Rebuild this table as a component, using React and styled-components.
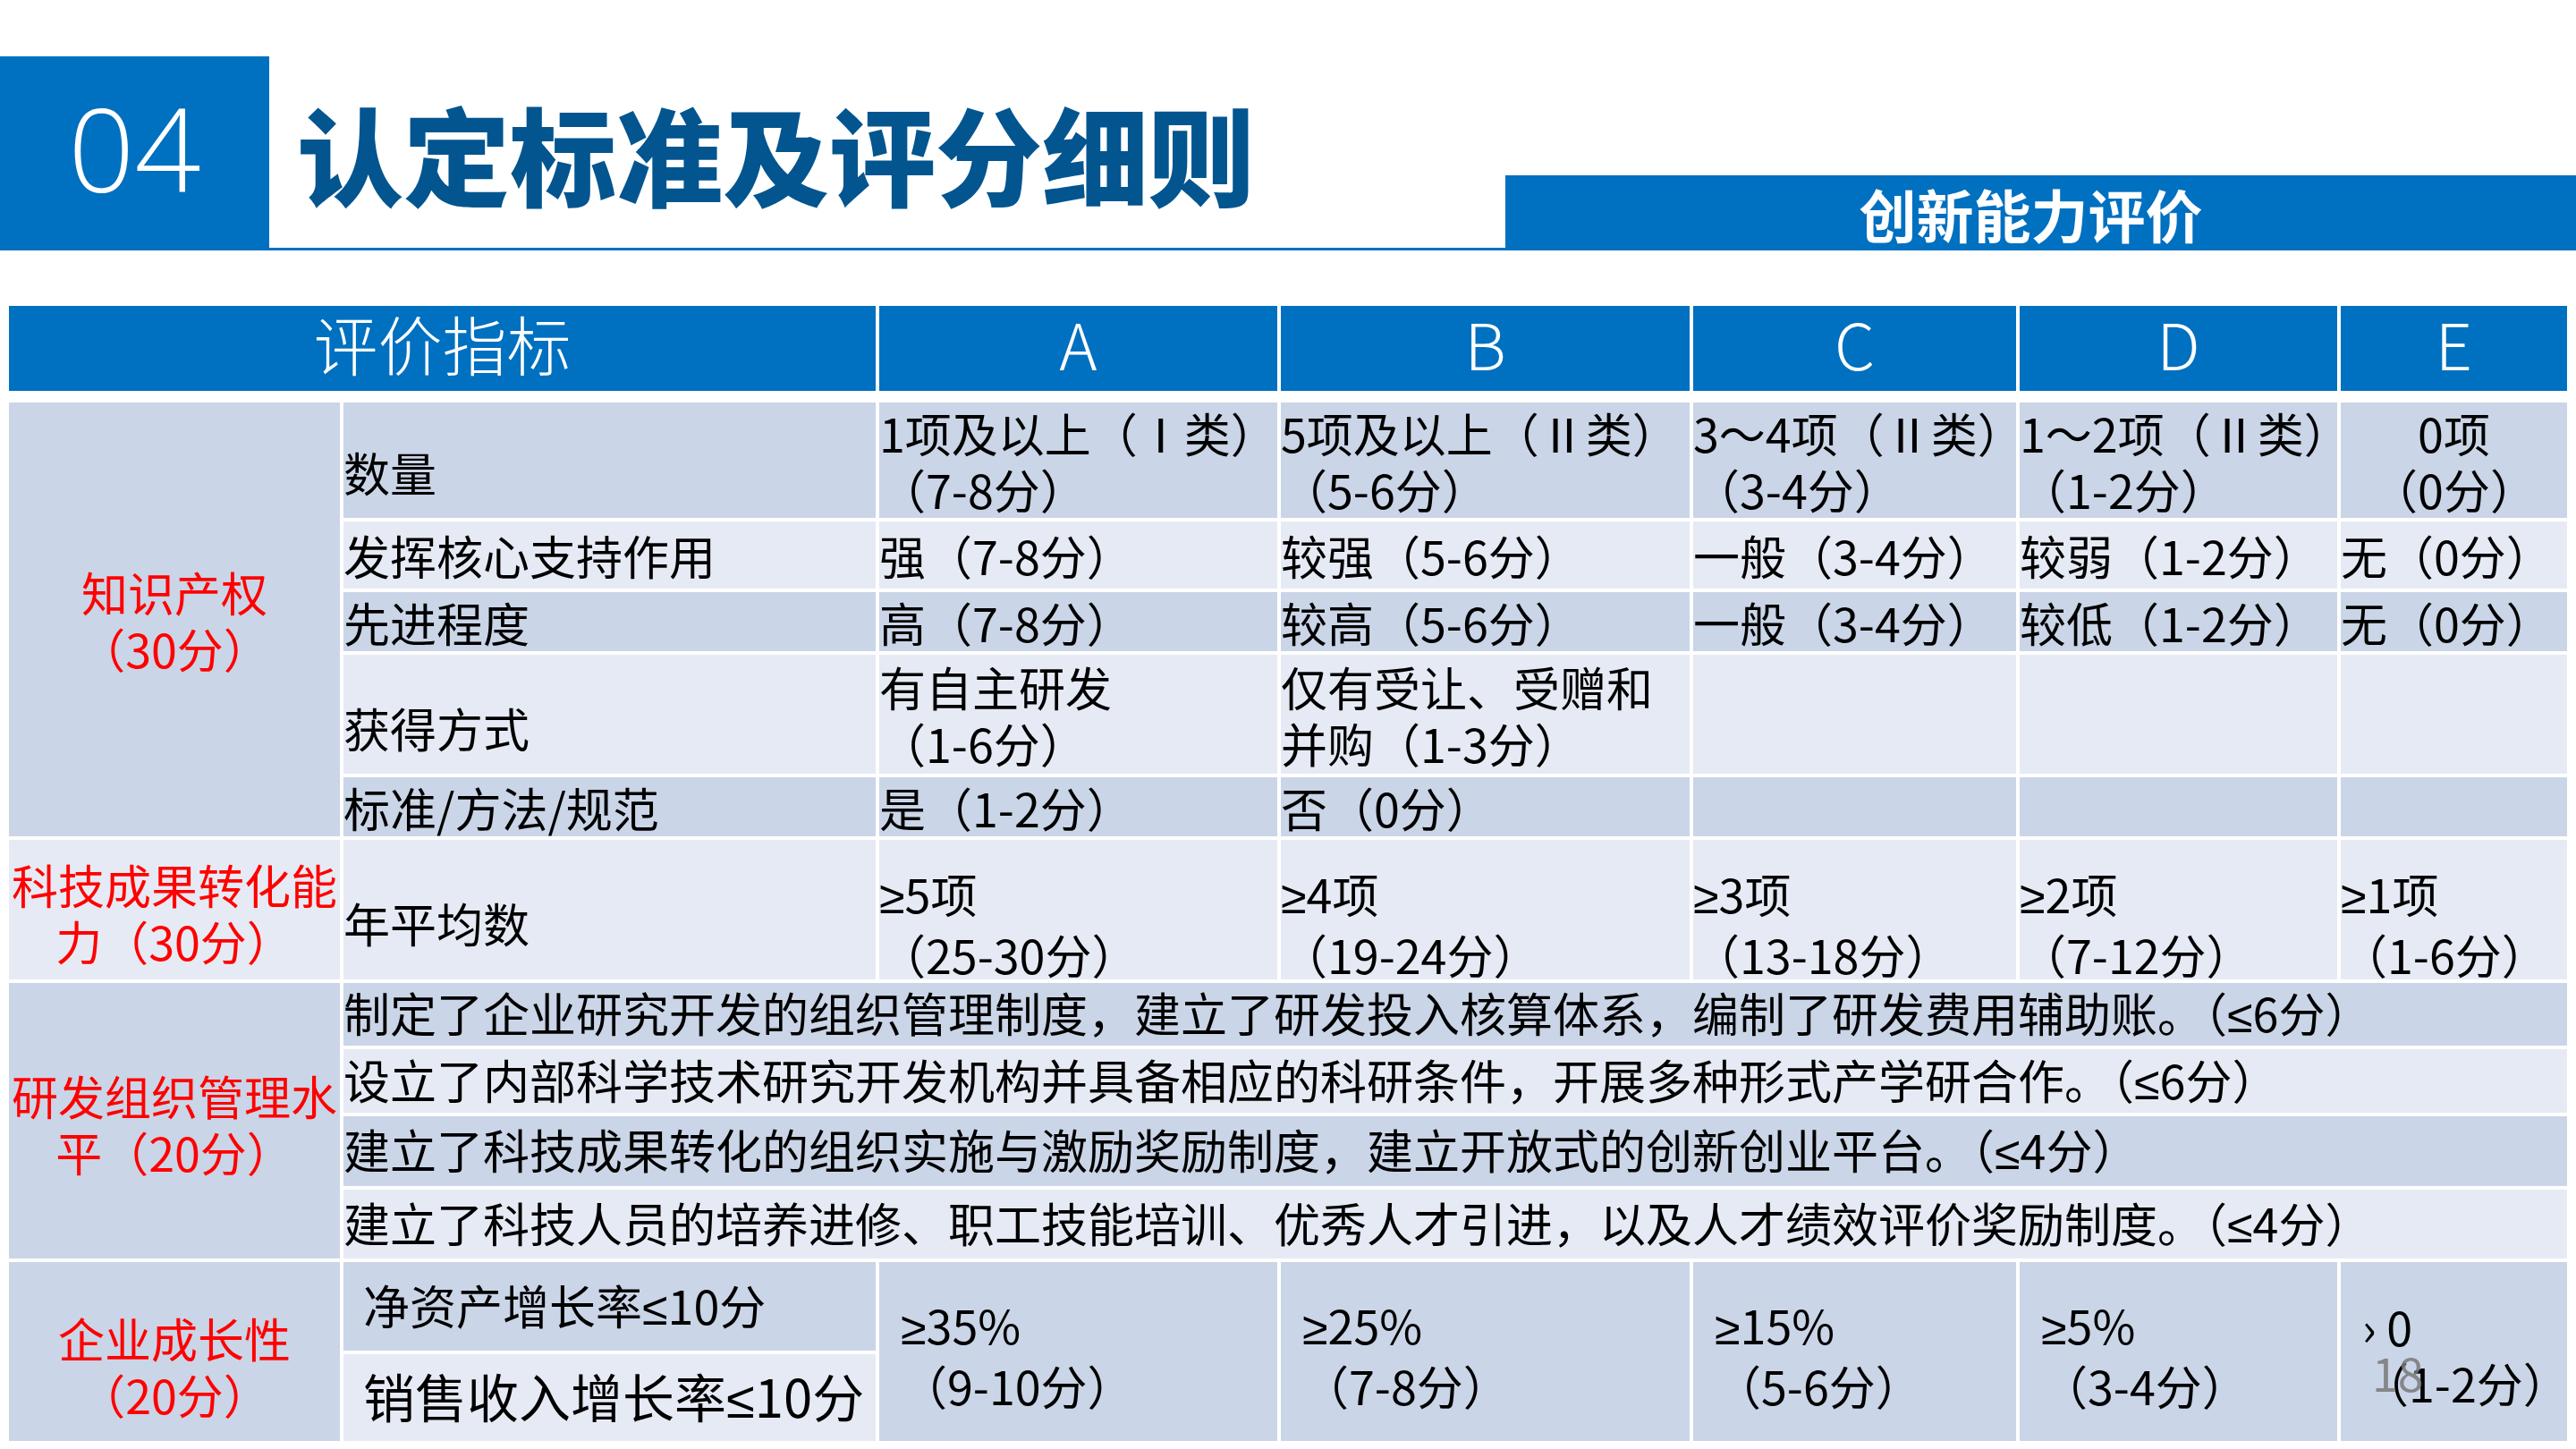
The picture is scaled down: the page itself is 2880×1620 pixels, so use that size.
import styled, { createGlobalStyle } from "styled-components";

const GlobalStyle = createGlobalStyle`
    html, body {
        margin: 0;
        padding: 0;
        background: #ffffff;
    }
`;

const BLUE = "#0070C0";
const DARK = "#CAD5E7";
const LIGHT = "#E6EAF4";

const Page = styled.div`
    position: relative;
    width: 2880px;
    height: 1620px;
    overflow: hidden;
    background: #ffffff;
    font-family: "Noto Sans CJK SC", "Noto Sans", sans-serif;
`;

const TopBar = styled.header`
    display: flex;
    align-items: flex-end;
    height: 217px;
    margin-top: 63px;
`;

const NumBox = styled.div`
    width: 301px;
    height: 100%;
    box-sizing: border-box;
    padding-bottom: 14px;
    background: ${BLUE};
    color: #ffffff;
    display: flex;
    align-items: center;
    justify-content: center;
    font-family: "Open Sans", "Noto Sans", sans-serif;
    font-weight: 300;
    font-size: 130px;
    line-height: 1;
`;

const TitleWrap = styled.div`
    flex: 1;
    height: 100%;
    box-sizing: border-box;
    border-bottom: 3px solid ${BLUE};
    display: flex;
    align-items: center;
    padding: 0 0 0 31px;
`;

const Title = styled.h1`
    margin: 0;
    font-size: 119px;
    font-weight: 900;
    line-height: 1;
    color: #02558f;
    white-space: nowrap;
`;

const SubBar = styled.div`
    width: 1197px;
    height: 84px;
    box-sizing: border-box;
    background: ${BLUE};
    color: #ffffff;
    display: flex;
    align-items: flex-end;
    justify-content: center;
    padding: 0 22px 10px 0;
    font-size: 64px;
    font-weight: 700;
    line-height: 1;
`;

const Table = styled.section`
    margin: 62px 10px 0;
    width: 2860px;
`;

const Grid = styled.div`
    display: grid;
    grid-template-columns: 370px 595px 445px 457px 361px 355px 253px;
    grid-template-rows: ${(p) => p.$rows};
    gap: 4px;
    margin-bottom: ${(p) => p.$mb || 0}px;
`;

const HeadCell = styled.div`
    grid-column: span ${(p) => p.$span || 1};
    background: ${BLUE};
    color: #ffffff;
    display: flex;
    align-items: center;
    justify-content: center;
    box-sizing: border-box;
    padding-bottom: 13px;
    font-size: 72px;
    font-weight: 300;
    line-height: 1;
`;

const Cell = styled.div`
    grid-column: span ${(p) => p.$span || 1};
    grid-row: span ${(p) => p.$rspan || 1};
    background: ${(p) => (p.$tone === "dark" ? DARK : LIGHT)};
    color: ${(p) => (p.$red ? "#ff0000" : "#000000")};
    display: flex;
    flex-direction: column;
    justify-content: center;
    align-items: ${(p) => (p.$center ? "center" : "flex-start")};
    text-align: ${(p) => (p.$center ? "center" : "left")};
    box-sizing: border-box;
    padding: ${(p) => p.$pt || 0}px 0 0 ${(p) => p.$pl || 0}px;
    font-size: ${(p) => p.$fs || 52}px;
    line-height: 63px;
    overflow: visible;
`;

const Line = styled.span`
    display: block;
    white-space: pre;
`;

// ≥ / ≤ drawn from a Latin face, as in the original slide
const Sym = styled.span`
    font-family: "Liberation Sans", "DejaVu Sans", sans-serif;
`;

const PageNum = styled.div`
    position: absolute;
    left: 2652px;
    top: 1508px;
    font-size: 52px;
    line-height: 1;
    color: rgba(120, 120, 120, 0.85);
    font-family: "Noto Sans CJK SC", sans-serif;
`;

const withSym = (text) =>
    text.split(/([≥≤])/).map((part, i) =>
        part === "≥" || part === "≤" ? <Sym key={i}>{part}</Sym> : part
    );

const TCell = ({ children, ...rest }) => (
    <Cell {...rest}>
        {String(children || "")
            .split("\n")
            .map((line, i) => (
                <Line key={i}>{withSym(line)}</Line>
            ))}
    </Cell>
);

const gradeRows = [
    {
        tone: "dark",
        sub: "数量",
        subPt: 26,
        cells: [
            "1项及以上（Ⅰ类）\n（7-8分）",
            "5项及以上（Ⅱ类）\n（5-6分）",
            "3～4项（Ⅱ类）\n（3-4分）",
            "1～2项（Ⅱ类）\n（1-2分）",
            "0项\n（0分）",
        ],
        centerLast: true,
    },
    {
        tone: "light",
        sub: "发挥核心支持作用",
        cells: ["强（7-8分）", "较强（5-6分）", "一般（3-4分）", "较弱（1-2分）", "无（0分）"],
    },
    {
        tone: "dark",
        sub: "先进程度",
        cells: ["高（7-8分）", "较高（5-6分）", "一般（3-4分）", "较低（1-2分）", "无（0分）"],
    },
    {
        tone: "light",
        sub: "获得方式",
        subPt: 30,
        cells: ["有自主研发\n（1-6分）", "仅有受让、受赠和\n并购（1-3分）", "", "", ""],
    },
    {
        tone: "dark",
        sub: "标准/方法/规范",
        cells: ["是（1-2分）", "否（0分）", "", "", ""],
    },
];

const transferCells = [
    "≥5项\n（25-30分）",
    "≥4项\n（19-24分）",
    "≥3项\n（13-18分）",
    "≥2项\n（7-12分）",
    "≥1项\n（1-6分）",
];

const manageRows = [
    "制定了企业研究开发的组织管理制度，建立了研发投入核算体系，编制了研发费用辅助账。（≤6分）",
    "设立了内部科学技术研究开发机构并具备相应的科研条件，开展多种形式产学研合作。（≤6分）",
    "建立了科技成果转化的组织实施与激励奖励制度，建立开放式的创新创业平台。（≤4分）",
    "建立了科技人员的培养进修、职工技能培训、优秀人才引进，以及人才绩效评价奖励制度。（≤4分）",
];

const growthCells = [
    "≥35%\n（9-10分）",
    "≥25%\n（7-8分）",
    "≥15%\n（5-6分）",
    "≥5%\n（3-4分）",
    "› 0\n（1-2分）",
];

const App = () => {
    return (
        <Page>
            <GlobalStyle />
            <TopBar>
                <NumBox>04</NumBox>
                <TitleWrap>
                    <Title>认定标准及评分细则</Title>
                </TitleWrap>
                <SubBar>创新能力评价</SubBar>
            </TopBar>

            <Table>
                <Grid $rows="95px" $mb={13}>
                    <HeadCell $span={2}>评价指标</HeadCell>
                    {["A", "B", "C", "D", "E"].map((l) => (
                        <HeadCell key={l}>{l}</HeadCell>
                    ))}
                </Grid>

                <Grid $rows="129px 75px 66px 133px 66px 156px 70px 71px 78px 77px 99px 97px">
                    {/* 知识产权 */}
                    <TCell $tone="dark" $rspan={5} $red $center>
                        {"知识产权\n（30分）"}
                    </TCell>
                    {gradeRows.map((row, i) => [
                        <TCell key={`s${i}`} $tone={row.tone} $pt={row.subPt}>
                            {row.sub}
                        </TCell>,
                        ...row.cells.map((c, j) => (
                            <TCell
                                key={`c${i}-${j}`}
                                $tone={row.tone}
                                $center={row.centerLast && j === 4}
                            >
                                {c}
                            </TCell>
                        )),
                    ])}

                    {/* 科技成果转化能力 */}
                    <TCell $tone="light" $red $center $pt={6}>
                        {"科技成果转化能\n力（30分）"}
                    </TCell>
                    <TCell $tone="light" $pt={28}>
                        年平均数
                    </TCell>
                    {transferCells.map((c, j) => (
                        <TCell key={`t${j}`} $tone="light" $pt={30}>
                            {c}
                        </TCell>
                    ))}

                    {/* 研发组织管理水平 */}
                    <TCell $tone="dark" $rspan={4} $red $center $pt={6}>
                        {"研发组织管理水\n平（20分）"}
                    </TCell>
                    {manageRows.map((text, i) => (
                        <TCell
                            key={`m${i}`}
                            $span={6}
                            $tone={i % 2 === 0 ? "dark" : "light"}
                        >
                            {text}
                        </TCell>
                    ))}

                    {/* 企业成长性 */}
                    <TCell $tone="dark" $rspan={2} $red $center $pt={32}>
                        {"企业成长性\n（20分）"}
                    </TCell>
                    <TCell $tone="dark" $pl={22}>
                        净资产增长率≤10分
                    </TCell>
                    {growthCells.map((c, j) => (
                        <TCell key={`g${j}`} $tone="dark" $rspan={2} $pl={24} $pt={6}>
                            {c}
                        </TCell>
                    ))}
                    <TCell $tone="light" $pl={22} $fs={58}>
                        销售收入增长率≤10分
                    </TCell>
                </Grid>
            </Table>

            <PageNum>18</PageNum>
        </Page>
    );
};

export default App;
